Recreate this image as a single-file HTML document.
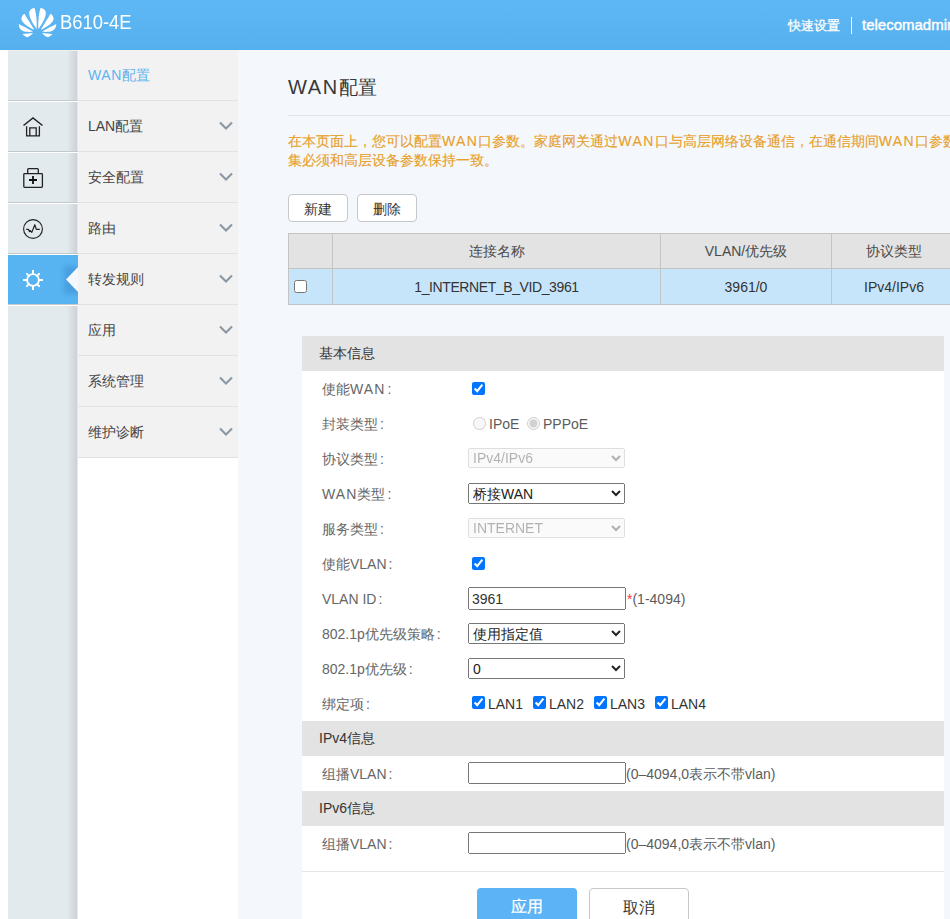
<!DOCTYPE html>
<html><head><meta charset="utf-8">
<style>
*{box-sizing:border-box;margin:0;padding:0}
html,body{width:950px;height:919px;overflow:hidden;background:#fff;font-family:"Liberation Sans",sans-serif;color:#333}
#hdr{position:absolute;left:0;top:0;width:950px;height:50px;background:linear-gradient(#5db8f5,#57b0ee);border-bottom:1px solid #4fb0f0}
#logo{position:absolute;left:15px;top:5px;width:45px;height:35px}
#model{position:absolute;left:60px;top:11px;font-size:20px;color:#fff;transform:scaleX(0.92);transform-origin:0 0}
#quick{position:absolute;left:788px;top:17px;font-size:13px;color:#fff;-webkit-text-stroke:0.3px #fff}
#vbar{position:absolute;left:851px;top:17px;width:1px;height:17px;background:#fff}
#user{position:absolute;left:862px;top:16px;font-size:15px;color:#fff;-webkit-text-stroke:0.4px #fff;white-space:nowrap}
#icons{position:absolute;left:8px;top:50px;width:70px;height:869px;background:#e3eaee}
#icons .shadow{position:absolute;right:1px;top:0;width:10px;height:100%;background:linear-gradient(90deg,rgba(175,180,185,0),rgba(175,180,185,.45))}
.ib{position:absolute;left:0;width:70px;height:51px}
.ib .g{position:absolute;left:0;bottom:1px;width:70px;height:1px;background:#c4c8cd}
.ib .w{position:absolute;left:0;bottom:0;width:70px;height:1px;background:#fff}
#menu{position:absolute;left:78px;top:50px;width:160px;height:408px;background:#f2f2f2}
.mi{position:absolute;left:0;width:160px;height:51px;border-bottom:1px solid #e2e2e2}
.mi>span{position:absolute;left:10px;top:17px;font-size:14px;color:#444;white-space:nowrap}
.mi svg{position:absolute;left:141px;top:20px}
#main{position:absolute;left:238px;top:50px;width:712px;height:869px;background:#f4f8fd;overflow:hidden}

#title{position:absolute;left:50px;top:25px;font-size:20px;color:#383838;white-space:nowrap}
#hr{position:absolute;left:50px;top:65px;width:700px;height:1px;background:#e1e3e6}
#note{position:absolute;left:50px;top:82px;font-size:14px;line-height:19px;color:#e8a02a;-webkit-text-stroke:0.15px #e8a02a;white-space:nowrap}
.btn{position:absolute;top:144px;width:60px;height:28px;border:1px solid #c8c8c8;border-radius:4px;background:#fff;font-size:14px;color:#333;text-align:center;line-height:28px}
#tbl{position:absolute;left:50px;top:183px;width:720px;height:72px;border-top:1px solid #c4c4c4;border-left:1px solid #c4c4c4}
#tbl .hd{position:absolute;left:0;top:0;width:720px;height:35px;background:#e3e3e3;border-bottom:1px solid #c4c4c4}
#tbl .rw{position:absolute;left:0;top:35px;width:720px;height:36px;background:#c6e5fb;border-bottom:1px solid #c4c4c4}
#tbl .vl{position:absolute;top:0;width:1px;height:71px;background:#c4c4c4}
#tbl .c{position:absolute;font-size:14px;color:#333;text-align:center;white-space:nowrap}
#panel{position:absolute;left:64px;top:286px;width:642px;height:600px;background:#fff}
.bar{position:absolute;left:0;width:642px;height:35px;background:#e3e3e3}
.bar span{position:absolute;left:17px;top:9px;font-size:14px;color:#333}

.lb{position:absolute;left:20px;font-size:14px;color:#666;white-space:nowrap;line-height:16px}
.ctl{position:absolute;left:166px}
select{font-family:"Liberation Sans",sans-serif;font-size:14px;color:#222}
select:disabled{color:rgba(16,16,16,.45)}
input[type=text]{font-family:"Liberation Sans",sans-serif;font-size:14px;color:#333;padding-left:2px}
.cb{margin:0;width:13px;height:13px}
.hint{position:absolute;font-size:14px;color:#5c5c5c;white-space:nowrap;line-height:16px}
#sep{position:absolute;left:0;top:535px;width:642px;height:1px;background:#e5e5e5}
.bb{position:absolute;top:552px;width:100px;height:40px;border-radius:4px;font-size:16px;text-align:center;line-height:38px}
</style></head><body>
<div id="hdr">
<svg id="logo" viewBox="0 0 950 739"><g fill="#fff" id="half">
<path d="M455,510 C380,400 290,260 300,160 C310,90 380,65 412,65 C440,150 470,330 455,510 Z"/>
<path d="M405,525 C300,470 150,390 135,300 C130,250 170,200 200,185 C260,290 350,420 405,525 Z"/>
<path d="M385,562 C300,510 150,440 80,400 C80,480 120,550 230,565 C300,570 360,568 385,562 Z"/>
<path d="M160,610 L380,590 C340,640 300,670 250,680 C200,650 170,630 160,610 Z"/>
</g><use href="#half" transform="translate(950,0) scale(-1,1)"/></svg>
<div id="model">B610-4E</div>
<div id="quick">快速设置</div><div id="vbar"></div><div id="user">telecomadmin</div>
</div>
<div id="icons"><div class="shadow"></div>
<div class="ib" style="top:0;height:52px;border-top:1px solid #eef0f1"><div class="g"></div><div class="w"></div></div>
<div class="ib" style="top:52px"><svg width="70" height="49" viewBox="8 102 70 49" style="position:absolute;left:0;top:0"><path d="M23.5,125.5 L33,118 L42.5,125.5" fill="none" stroke="#222" stroke-width="1.5"/><path d="M26.6,126.3 V135.9 H39.4 V126.3 M29.8,135.9 V127.9 H36.2 V135.9" fill="none" stroke="#222" stroke-width="1.3"/></svg><div class="g"></div><div class="w"></div></div>
<div class="ib" style="top:103px"><svg width="70" height="49" viewBox="8 153 70 49" style="position:absolute;left:0;top:0"><rect x="23.8" y="173.7" width="18.6" height="13.6" rx="0.8" fill="none" stroke="#222" stroke-width="1.3"/><path d="M27.7,173.7 V169.5 Q27.7,168.6 28.6,168.6 H37.4 Q38.3,168.6 38.3,169.5 V173.7" fill="none" stroke="#222" stroke-width="1.3"/><path d="M29,180 H37 M33,176 V184" stroke="#111" stroke-width="1.8"/></svg><div class="g"></div><div class="w"></div></div>
<div class="ib" style="top:154px"><svg width="70" height="49" viewBox="8 204 70 49" style="position:absolute;left:0;top:0"><circle cx="33" cy="229" r="9.4" fill="none" stroke="#222" stroke-width="1.15"/><path d="M26.2,229.4 H28.4 L29.6,231.6 L30.4,230.6 L31.8,232.4 L34.8,224.7 L36.3,229.4 H39.8" fill="none" stroke="#222" stroke-width="1.2" stroke-linejoin="round"/></svg><div class="g"></div><div class="w"></div></div>
<div class="ib" style="top:205px;background:#58b3f1"><svg width="70" height="49" viewBox="8 255 70 49" style="position:absolute;left:0;top:0"><defs><filter id="bl" x="-50%" y="-50%" width="200%" height="200%"><feGaussianBlur stdDeviation="2.5"/></filter></defs><rect x="64" y="266" width="16" height="28" fill="#3a8fd2" opacity=".55" filter="url(#bl)"/><polygon points="78,267 66,279.5 78,292" fill="#f4f8fd"/><circle cx="33" cy="280" r="5.9" fill="none" stroke="#fff" stroke-width="1.9"/><path d="M33,270 V275 M33,285 V290 M23,280 H28 M38,280 H43" stroke="#fff" stroke-width="2"/><path d="M26.9,273.9 L28.9,275.9 M37.1,284.1 L39.1,286.1 M39.1,273.9 L37.1,275.9 M28.9,284.1 L26.9,286.1" stroke="#fff" stroke-width="2" stroke-linecap="round"/></svg><div class="g" style="background:#c9cacc"></div><div class="w"></div></div>
</div>
<div id="menu"><div class="mi" style="top:0"><span style="color:#5ab4f0"><span style="letter-spacing:0.6px">WAN</span>配置</span></div><div class="mi" style="top:51px"><span>LAN配置</span><svg width="14" height="9" viewBox="0 0 14 9"><path d="M1,1.5 L7,7.5 L13,1.5" fill="none" stroke="#8a96a1" stroke-width="2.1"/></svg></div><div class="mi" style="top:102px"><span>安全配置</span><svg width="14" height="9" viewBox="0 0 14 9"><path d="M1,1.5 L7,7.5 L13,1.5" fill="none" stroke="#8a96a1" stroke-width="2.1"/></svg></div><div class="mi" style="top:153px"><span>路由</span><svg width="14" height="9" viewBox="0 0 14 9"><path d="M1,1.5 L7,7.5 L13,1.5" fill="none" stroke="#8a96a1" stroke-width="2.1"/></svg></div><div class="mi" style="top:204px"><span>转发规则</span><svg width="14" height="9" viewBox="0 0 14 9"><path d="M1,1.5 L7,7.5 L13,1.5" fill="none" stroke="#8a96a1" stroke-width="2.1"/></svg></div><div class="mi" style="top:255px"><span>应用</span><svg width="14" height="9" viewBox="0 0 14 9"><path d="M1,1.5 L7,7.5 L13,1.5" fill="none" stroke="#8a96a1" stroke-width="2.1"/></svg></div><div class="mi" style="top:306px"><span>系统管理</span><svg width="14" height="9" viewBox="0 0 14 9"><path d="M1,1.5 L7,7.5 L13,1.5" fill="none" stroke="#8a96a1" stroke-width="2.1"/></svg></div><div class="mi" style="top:357px"><span>维护诊断</span><svg width="14" height="9" viewBox="0 0 14 9"><path d="M1,1.5 L7,7.5 L13,1.5" fill="none" stroke="#8a96a1" stroke-width="2.1"/></svg></div></div>
<div id="main">
<div id="title"><span style="letter-spacing:1.7px">WAN</span><span style="font-size:19px;letter-spacing:0.6px;margin-left:-0.5px">配置</span></div>
<div id="hr"></div>
<div id="note">在本页面上，您可以配置<span style="letter-spacing:1.4px">WAN</span>口参数。家庭网关通过<span style="letter-spacing:1.4px">WAN</span>口与高层网络设备通信，在通信期间<span style="letter-spacing:1.4px">WAN</span>口参数<br>集必须和高层设备参数保持一致。</div>
<div class="btn" style="left:50px">新建</div>
<div class="btn" style="left:119px">删除</div>
<div id="tbl">
<div class="hd"></div><div class="rw"></div>
<div class="vl" style="left:43px"></div><div class="vl" style="left:371px"></div><div class="vl" style="left:542px"></div>
<div class="c" style="left:44px;width:327px;top:9px;color:#4a4a4a">连接名称</div>
<div class="c" style="left:372px;width:170px;top:9px;color:#4a4a4a">VLAN/优先级</div>
<div class="c" style="left:543px;width:124px;top:9px;color:#4a4a4a">协议类型</div>
<input type="checkbox" style="position:absolute;left:5px;top:46px;width:13px;height:13px;margin:0">
<div class="c" style="left:44px;width:327px;top:45px;letter-spacing:-0.4px">1_INTERNET_B_VID_3961</div>
<div class="c" style="left:372px;width:170px;top:45px">3961/0</div>
<div class="c" style="left:543px;width:124px;top:45px">IPv4/IPv6</div>
</div>
<div id="panel">
<div class="bar" style="top:0"><span>基本信息</span></div>
<div class="lb" style="top:45px">使能<span style="letter-spacing:1.1px">WAN</span><i style="font-style:normal;margin-left:2px">:</i></div><input type="checkbox" checked class="cb" style="position:absolute;left:170px;top:46px">
<div class="lb" style="top:80px">封装类型<i style="font-style:normal;margin-left:2px">:</i></div><input type="radio" disabled style="position:absolute;left:171px;top:81px;margin:0;width:13px;height:13px"><span class="hint" style="left:187px;top:80px">IPoE</span><input type="radio" disabled checked style="position:absolute;left:225px;top:81px;margin:0;width:13px;height:13px"><span class="hint" style="left:241px;top:80px">PPPoE</span>
<div class="lb" style="top:115px">协议类型<i style="font-style:normal;margin-left:2px">:</i></div><select disabled style="position:absolute;left:166px;top:112px;width:157px;height:20px"><option>IPv4/IPv6</option></select>
<div class="lb" style="top:150px"><span style="letter-spacing:1.1px">WAN</span>类型<i style="font-style:normal;margin-left:2px">:</i></div><select style="position:absolute;left:166px;top:147px;width:157px;height:21px"><option>桥接WAN</option></select>
<div class="lb" style="top:185px">服务类型<i style="font-style:normal;margin-left:2px">:</i></div><select disabled style="position:absolute;left:166px;top:182px;width:157px;height:20px"><option>INTERNET</option></select>
<div class="lb" style="top:220px">使能VLAN<i style="font-style:normal;margin-left:2px">:</i></div><input type="checkbox" checked class="cb" style="position:absolute;left:170px;top:221px">
<div class="lb" style="top:255px">VLAN ID<i style="font-style:normal;margin-left:2px">:</i></div><input type="text" value="3961" style="position:absolute;left:166px;top:251px;width:158px;height:23px"><span class="hint" style="left:325px;top:255px"><span style="color:#f33">*</span>(1-4094)</span>
<div class="lb" style="top:290px">802.1p优先级策略<i style="font-style:normal;margin-left:2px">:</i></div><select style="position:absolute;left:166px;top:287px;width:157px;height:21px"><option>使用指定值</option></select>
<div class="lb" style="top:325px">802.1p优先级<i style="font-style:normal;margin-left:2px">:</i></div><select style="position:absolute;left:166px;top:322px;width:157px;height:21px"><option>0</option></select>
<div class="lb" style="top:360px">绑定项<i style="font-style:normal;margin-left:2px">:</i></div><input type="checkbox" checked class="cb" style="position:absolute;left:170px;top:360px"><span class="hint" style="left:186px;top:360px;color:#333">LAN1</span><input type="checkbox" checked class="cb" style="position:absolute;left:231px;top:360px"><span class="hint" style="left:247px;top:360px;color:#333">LAN2</span><input type="checkbox" checked class="cb" style="position:absolute;left:292px;top:360px"><span class="hint" style="left:308px;top:360px;color:#333">LAN3</span><input type="checkbox" checked class="cb" style="position:absolute;left:353px;top:360px"><span class="hint" style="left:369px;top:360px;color:#333">LAN4</span>
<div class="bar" style="top:385px"><span>IPv4信息</span></div>
<div class="lb" style="top:430px">组播VLAN<i style="font-style:normal;margin-left:2px">:</i></div><input type="text" style="position:absolute;left:166px;top:426px;width:158px;height:22px"><span class="hint" style="left:324px;top:430px">(0–4094,0表示不带vlan)</span>
<div class="bar" style="top:455px"><span>IPv6信息</span></div>
<div class="lb" style="top:500px">组播VLAN<i style="font-style:normal;margin-left:2px">:</i></div><input type="text" style="position:absolute;left:166px;top:496px;width:158px;height:22px"><span class="hint" style="left:324px;top:500px">(0–4094,0表示不带vlan)</span>
<div id="sep"></div>
<div class="bb" style="left:175px;background:#5cb3f5;color:#fff;-webkit-text-stroke:0.3px #fff">应用</div>
<div class="bb" style="left:287px;background:#fff;border:1px solid #c8c8c8;color:#333">取消</div>
</div>
</div>
</body></html>
